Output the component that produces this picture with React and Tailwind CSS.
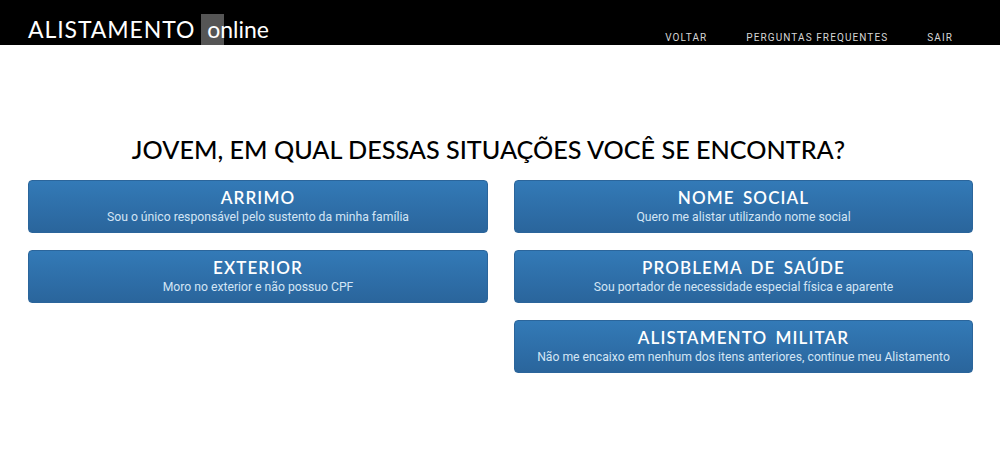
const Btn = ({ title, sub }) => (
  <button className="block w-full h-[53px] rounded-[4px] border border-[#2b659b] bg-gradient-to-b from-[#337ab7] to-[#2a659c] text-center">
    <div className="font-['Lato',sans-serif] font-semibold text-[17px] leading-[20px] tracking-[1.1px] [word-spacing:3px] text-white">{title}</div>
    <div className="font-['Roboto',sans-serif] text-[12.2px] leading-[16px] mt-[1px] text-[#d3e5f5]">{sub}</div>
  </button>
);

export default function App() {
  return (
    <div className="w-[1000px] h-[458px] bg-white overflow-hidden">
      <header className="h-[45px] bg-black flex justify-between pl-[28px] pr-[47px]">
        <div className="flex items-end font-['Lato',sans-serif] text-white text-[23px] leading-[30px]">
          <span className="pb-[1px] tracking-[0.9px]">ALISTAMENTO</span>
          <span className="relative ml-[6px] pl-[6px] pb-[1px]">
            <span className="absolute left-0 bottom-0 w-[23px] h-[31px] bg-[#555555]" />
            <span className="relative">online</span>
          </span>
        </div>
        <nav className="flex items-end gap-[39px] font-['Roboto',sans-serif] text-[10px] leading-[15px] tracking-[1.1px] text-[#d6d6d6]">
          <span>VOLTAR</span>
          <span>PERGUNTAS FREQUENTES</span>
          <span>SAIR</span>
        </nav>
      </header>
      <main className="pl-[28px] pr-[27px]">
        <h1 className="mt-[81px] mb-[6px] h-[48px] flex items-center justify-center pr-[24px] font-['Lato',sans-serif] text-[25.2px] font-medium text-black whitespace-nowrap">
          JOVEM, EM QUAL DESSAS SITUAÇÕES VOCÊ SE ENCONTRA?
        </h1>
        <div className="grid grid-cols-[460px_459px] gap-x-[26px] gap-y-[17px]">
          <Btn title="ARRIMO" sub="Sou o único responsável pelo sustento da minha família" />
          <Btn title="NOME SOCIAL" sub="Quero me alistar utilizando nome social" />
          <Btn title="EXTERIOR" sub="Moro no exterior e não possuo CPF" />
          <Btn title="PROBLEMA DE SAÚDE" sub="Sou portador de necessidade especial física e aparente" />
          <div />
          <Btn title="ALISTAMENTO MILITAR" sub="Não me encaixo em nenhum dos itens anteriores, continue meu Alistamento" />
        </div>
      </main>
    </div>
  );
}
